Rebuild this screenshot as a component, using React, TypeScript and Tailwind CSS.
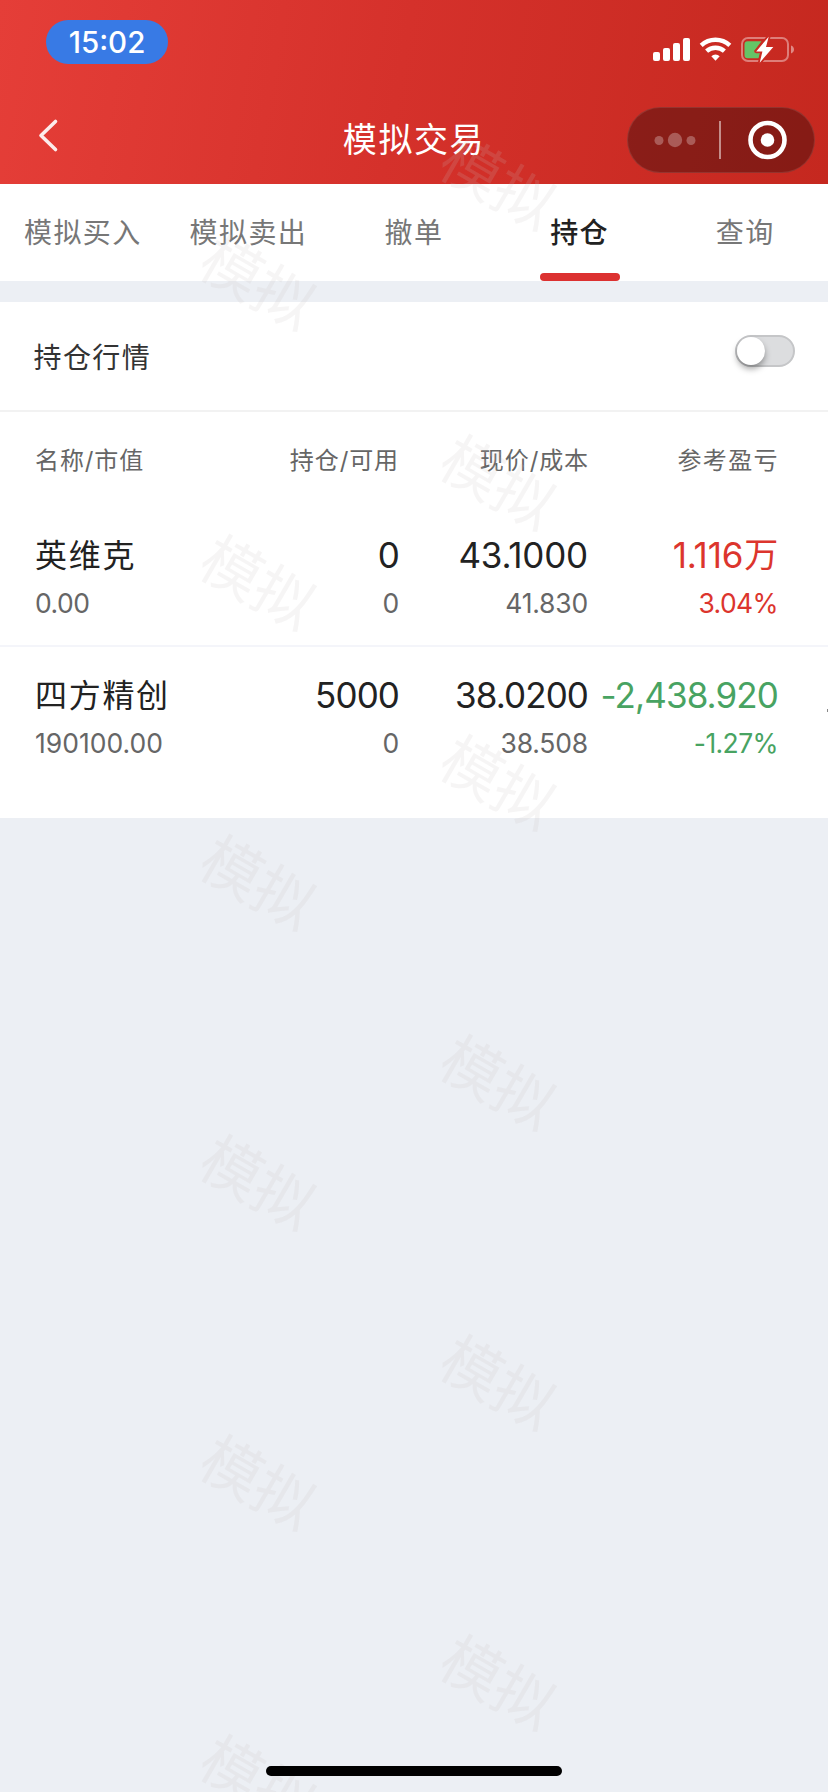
import { useState } from "react";
import clsx from "clsx";

type Holding = {
  name: string;
  value: string;
  amount: string;
  available: string;
  price: string;
  cost: string;
  profit: string;
  unit?: string;
  rate: string;
  up: boolean;
};

const tabs = ["模拟买入", "模拟卖出", "撤单", "持仓", "查询"];

const holdings: Holding[] = [
  {
    name: "英维克",
    value: "0.00",
    amount: "0",
    available: "0",
    price: "43.1000",
    cost: "41.830",
    profit: "1.116",
    unit: "万",
    rate: "3.04%",
    up: true,
  },
  {
    name: "四方精创",
    value: "190100.00",
    amount: "5000",
    available: "0",
    price: "38.0200",
    cost: "38.508",
    profit: "-2,438.920",
    rate: "-1.27%",
    up: false,
  },
];

function StatusIcons() {
  return (
    <svg className="mt-[15px] h-[30px] w-[146px]" viewBox="0 0 146 30" fill="none">
      <g fill="#fff">
        <rect x="3" y="17" width="7" height="9" rx="2" />
        <rect x="13" y="13" width="7" height="13" rx="2" />
        <rect x="23" y="8" width="7" height="18" rx="2" />
        <rect x="33" y="3" width="7" height="23" rx="2" />
      </g>
      <g stroke="#fff" strokeWidth="4.4">
        <path d="M51.2 10.4a21 21 0 0 1 28.6 0" />
        <path d="M56.6 16.2a13 13 0 0 1 17.8 0" />
      </g>
      <path d="M61.3 21.2a6.2 6.2 0 0 1 8.4 0l-4.2 4.6z" fill="#fff" />
      <rect x="92" y="3" width="46" height="23" rx="6" stroke="#fff" strokeOpacity=".4" strokeWidth="2" />
      <path d="M141 10.5c1.8.6 3 2.2 3 4s-1.2 3.400-3 4z" fill="#fff" fillOpacity=".45" />
      <path d="M97.500 6.300h14l-7.500 10h6.500l-2 7H97.500a3 3 0 0 1-3-3V9.300a3 3 0 0 1 3-3z" fill="#65c466" />
      <path
        d="M118.700 1.700 106.200 16.400h6.200l-2.700 11.300 13.600-15.600h-7.300z"
        fill="#fff"
        stroke="#ca2b23"
        strokeWidth="3.600"
        strokeLinejoin="round"
        paintOrder="stroke"
      />
    </svg>
  );
}

function Header() {
  return (
    <header className="h-[184px] bg-[linear-gradient(100deg,#e53e38_0%,#d5312b_48%,#c5281f_100%)] text-white">
      <div className="flex h-[86px] items-start justify-between pt-5 pr-[32px] pl-[46px]">
        <span className="flex h-[44px] w-[122px] items-center justify-center rounded-full bg-[#387ae5] pt-px text-[29.500px] font-medium">
          15:02
        </span>
        <StatusIcons />
      </div>
      <div className="grid h-[98px] grid-cols-3 items-start">
        <button className="mt-[31px] ml-[34px] w-fit" aria-label="返回">
          <svg className="h-[38px] w-[26px]" viewBox="0 0 26 38" fill="none">
            <path d="M21.500 4.500 7 18.500 21.500 32.500" stroke="#fff" strokeOpacity=".9" strokeWidth="3.600" strokeLinecap="round" strokeLinejoin="round" />
          </svg>
        </button>
        <h1 className="mt-[29px] text-center text-[34px] leading-[50px] tracking-[1.600px]">模拟交易</h1>
        <div className="mt-[21px] mr-[13px] flex h-[66px] w-[188px] items-center justify-self-end rounded-full border border-white/10 bg-black/32">
          <svg className="h-[64px] w-[186px]" viewBox="0 0 186 64" fill="none">
            <g fill="#fff" fillOpacity=".28">
              <circle cx="31" cy="32.500" r="4.500" />
              <circle cx="47" cy="32" r="7.200" />
              <circle cx="63" cy="32.500" r="4.500" />
            </g>
            <path d="M92 13v38" stroke="#fff" strokeOpacity=".5" strokeWidth="2" />
            <circle cx="139.500" cy="32" r="17" stroke="#fff" strokeWidth="4.600" />
            <circle cx="139.500" cy="32" r="6.800" fill="#fff" />
          </svg>
        </div>
      </div>
    </header>
  );
}

function Toggle() {
  const [on, setOn] = useState(false);

  return (
    <button
      role="switch"
      aria-checked={on}
      aria-label="持仓行情"
      onClick={() => setOn((v) => !v)}
      className={clsx(
        "flex h-8 w-[60px] items-center rounded-full border-2 border-[#c5c6c8]",
        on ? "justify-end bg-[#dc3130]" : "bg-[#dcdddf]",
      )}
    >
      <span className="size-7 rounded-full bg-white shadow-[0_4px_6px_rgba(0,0,0,0.35)]" />
    </button>
  );
}

function Cell({ main, unit, sub, color }: { main: string; unit?: string; sub: string; color?: string }) {
  const loose = main.includes("1");

  return (
    <div className={clsx("flex flex-col items-end whitespace-nowrap", color)}>
      <span
        className={clsx(
          "flex h-[48px] text-[35px] leading-[48px]",
          !color && "text-[#222]",
          loose ? "tracking-[-0.200px]" : "tracking-[-0.900px]",
        )}
      >
        {main}
        {unit && <span className="ml-px text-[34px] leading-[48px]">{unit}</span>}
      </span>
      <span
        className={clsx(
          "h-[48px] text-[26.500px] leading-[49px]",
          color ? "tracking-[-0.600px]" : "tracking-[-0.200px] text-[#666]",
        )}
      >
        {sub}
      </span>
    </div>
  );
}

function HoldingRow({ item }: { item: Holding }) {
  const color = item.up ? "text-[#dc352d]" : "text-[#48a362]";

  return (
    <div className="grid h-[140px] grid-cols-[175px_189px_189px_190px] border-b-2 border-[#f4f5fa] pt-[24px] pl-[35px] last:border-transparent">
      <div className="flex flex-col whitespace-nowrap">
        <span className="h-[48px] text-[32px] leading-[50px] tracking-[1.700px] text-[#222]">{item.name}</span>
        <span className={clsx("text-[26.500px] leading-[49px] text-[#666]", item.value.length < 6 && "tracking-[-0.500px]")}>
          {item.value}
        </span>
      </div>
      <Cell main={item.amount} sub={item.available} />
      <Cell main={item.price} sub={item.cost} />
      <Cell main={item.profit} unit={item.unit} sub={item.rate} color={color} />
    </div>
  );
}

/** Repeating diagonal watermark laid over the whole screen. */
function Watermark() {
  const column = (className: string) => (
    <div className={clsx("absolute flex flex-col", className)}>
      {Array.from({ length: 6 }, (_, i) => (
        <span key={i} className="flex h-[300px] w-[120px] items-center justify-center">
          <span className="rotate-30 text-[60px] leading-none whitespace-nowrap">模拟</span>
        </span>
      ))}
    </div>
  );

  return (
    <div className="pointer-events-none absolute inset-0 overflow-hidden text-[#c6c3c0]/16" aria-hidden="true">
      {column("left-[198px] top-[133px]")}
      {column("left-[438px] top-[33px]")}
    </div>
  );
}

export default function App() {
  const [active, setActive] = useState("持仓");

  return (
    <div className="relative flex h-[1792px] w-[828px] flex-col overflow-hidden bg-[#eceff4] font-['Inter','Noto_Sans_CJK_SC',sans-serif]">
      <Header />

      <nav className="grid h-[97px] grid-cols-5 bg-white">
        {tabs.map((tab) => (
          <button
            key={tab}
            onClick={() => setActive(tab)}
            className={clsx(
              "flex flex-col items-center justify-between pt-[29px] text-[28px] leading-10 tracking-[1.400px]",
              tab === active ? "font-medium text-[#222]" : "text-[#777]",
            )}
          >
            {tab}
            {tab === active && <span className="h-2 w-20 rounded-full bg-[#dc3130]" />}
          </button>
        ))}
      </nav>

      <section className="mt-[21px] h-[516px] bg-white">
        <div className="flex h-[110px] items-start justify-between border-b-2 border-[#f2f2f2] pt-[33px] pr-[33px] pl-[33.500px]">
          <span className="mt-[2px] text-[28px] leading-[42px] tracking-[1.400px] text-[#333]">持仓行情</span>
          <Toggle />
        </div>
        <div className="grid h-[95px] grid-cols-[175px_189px_190px_190px] pt-[29px] pl-[35px] text-right text-[24px] leading-[40px] tracking-[0.900px] text-[#666]">
          <span className="text-left">名称/市值</span>
          <span>持仓/可用</span>
          <span>现价/成本</span>
          <span className="tracking-[1.400px]">参考盈亏</span>
        </div>
        {holdings.map((item) => (
          <HoldingRow key={item.name} item={item} />
        ))}
      </section>

      <span className="absolute top-[709px] right-0 h-[3px] w-px bg-[#888]" />

      <Watermark />
      <div className="absolute bottom-4 left-[266px] h-[10px] w-[296px] rounded-full bg-black" />
    </div>
  );
}
